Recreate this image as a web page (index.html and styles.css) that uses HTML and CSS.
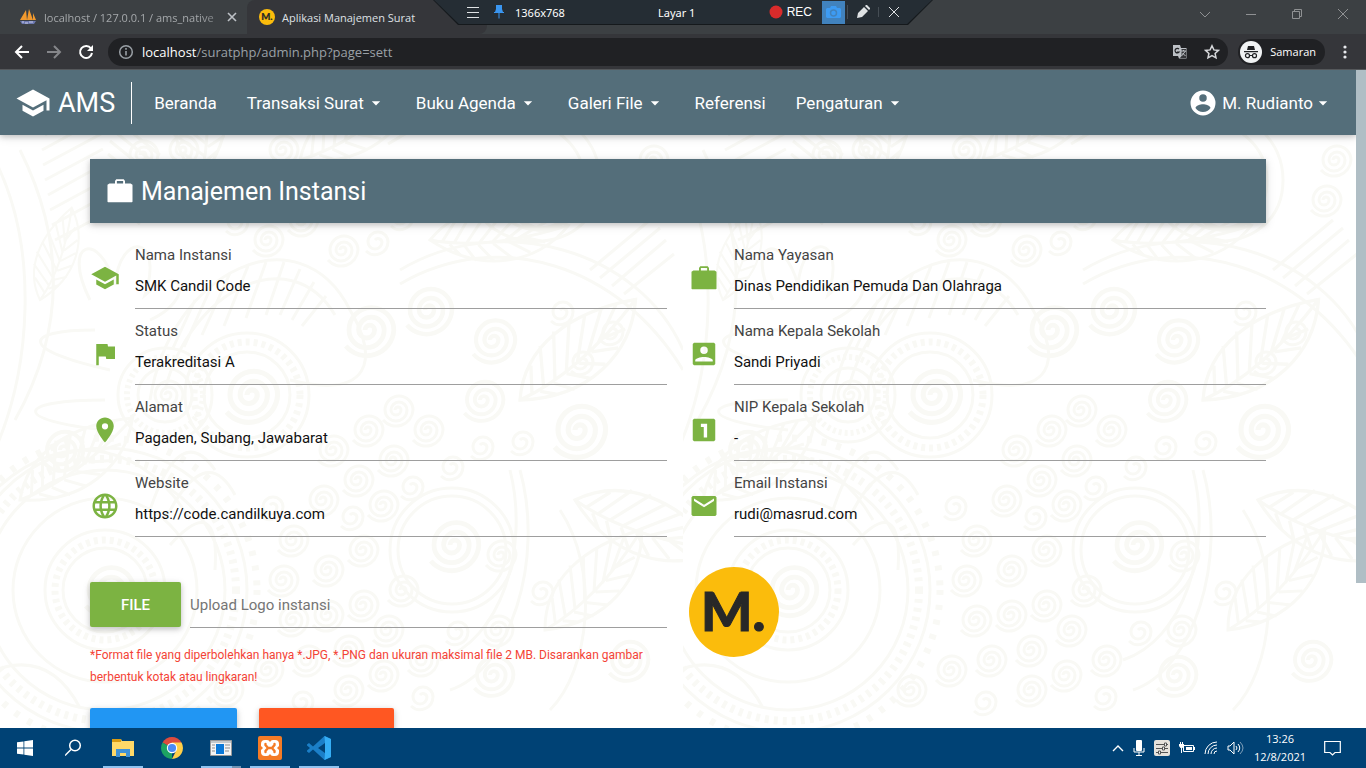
FILE: index.html
```html
<!DOCTYPE html>
<html lang="id">
<head>
<meta charset="utf-8">
<meta name="viewport" content="width=device-width, initial-scale=1">
<title>Aplikasi Manajemen Surat</title>
<link rel="stylesheet" href="styles.css">
</head>
<body>
<svg width="0" height="0" class="defs" aria-hidden="true">
  <defs>
    <symbol id="school" viewBox="0 0 24 24"><path d="M5 13.18v4L12 21l7-3.82v-4L12 17l-7-3.82zM12 3 1 9l11 6 9-4.91V17h2V9L12 3z"/></symbol>
    <symbol id="work" viewBox="0 0 24 24"><path d="M20.500 6H16V4l-1-1.500H9L8 4v2H3.500L2 7v13.500l.5.5h19l.5-.5V7zM14.500 6h-5V4h5v2z"/></symbol>
    <symbol id="flag" viewBox="0 0 24 24"><path d="M14.400 6 14 4H5v17h2v-7h5.600l.4 2h7V6z"/></symbol>
    <symbol id="place" viewBox="0 0 24 24"><path d="M12 2C8.130 2 5 5.130 5 9c0 5.250 7 13 7 13s7-7.750 7-13c0-3.870-3.130-7-7-7zm0 9.500a2.500 2.500 0 0 1 0-5 2.500 2.500 0 0 1 0 5z"/></symbol>
    <symbol id="globe" viewBox="0 0 24 24"><path d="M11.990 2C6.470 2 2 6.480 2 12s4.470 10 9.990 10C17.520 22 22 17.520 22 12S17.520 2 11.990 2zm6.930 6h-2.950c-.32-1.250-.78-2.450-1.380-3.560 1.840.63 3.370 1.910 4.330 3.560zM12 4.040c.83 1.200 1.480 2.530 1.910 3.960h-3.820c.43-1.430 1.080-2.760 1.910-3.960zM4.260 14C4.100 13.360 4 12.690 4 12s.1-1.360.26-2h3.380c-.08.66-.14 1.320-.14 2s.06 1.340.14 2H4.260zm.82 2h2.950c.32 1.250.78 2.450 1.380 3.560-1.840-.63-3.370-1.900-4.330-3.560zm2.950-8H5.080c.96-1.660 2.490-2.930 4.330-3.560C8.810 5.550 8.350 6.750 8.030 8zM12 19.960c-.83-1.200-1.480-2.530-1.910-3.960h3.820c-.43 1.430-1.080 2.760-1.910 3.960zM14.340 14H9.660c-.09-.66-.16-1.320-.16-2s.07-1.350.16-2h4.680c.09.65.16 1.320.16 2s-.07 1.340-.16 2zm.25 5.560c.6-1.110 1.060-2.310 1.380-3.560h2.950c-.96 1.650-2.490 2.930-4.330 3.560zM16.360 14c.08-.66.14-1.320.14-2s-.06-1.340-.14-2h3.380c.16.64.26 1.310.26 2s-.1 1.360-.26 2h-3.380z"/></symbol>
    <symbol id="accountbox" viewBox="0 0 24 24"><path d="M3 4v16l1 1h16l1-1V4l-1-1H4zm12 5a3 3 0 0 1-6 0 3 3 0 0 1 6 0zm-10 8c0-1.500 4-2.600 7-2.600s7 1.100 7 2.600v1H5v-1z"/></symbol>
    <symbol id="one" viewBox="0 0 24 24"><path d="M20 3H4L3 4v16l1 1h16l1-1V4zm-5.500 15h-2.700V9.500H9.500V7h5v11z"/></symbol>
    <symbol id="mail" viewBox="0 0 24 24"><path d="M21 4H3L2 5v14l1 1h18l1-1V5zm-1 4-8 5-8-5V6l8 5 8-5v2z"/></symbol>
    <symbol id="account" viewBox="0 0 24 24"><path d="M12 2a10 10 0 1 0 0 20 10 10 0 0 0 0-20zm0 3a3 3 0 1 1 0 6 3 3 0 0 1 0-6zm0 14.200a7.200 7.200 0 0 1-6-3.220c.03-1.990 4-3.080 6-3.080s5.970 1.090 6 3.080a7.200 7.200 0 0 1-6 3.220z"/></symbol>
    <symbol id="caret" viewBox="0 0 24 24"><path d="m7 10 5 5 5-5z"/></symbol>
    <symbol id="mlogo" viewBox="0 0 90 90"><circle cx="45" cy="45" r="45" fill="#fbbc0c"/><text x="12" y="64" class="mlogo-text">M.</text></symbol>
    <g id="spiral"><path d="M0 0a3 3 0 0 1 6 0a5 5 0 0 1-10 0a8 8 0 0 1 16 0a11 11 0 0 1-22 0a14 14 0 0 1 28 0a17 17 0 0 1-30 10"/></g>
    <g id="curl"><path d="M0 0a4 4 0 0 1 7 2a7 7 0 0 1-14 0a10 10 0 0 1 20 0a13 13 0 0 1-22 9"/></g>
    <g id="feather"><path d="M0 0C20-45 70-60 130-50C110-5 60 20 0 0zM0 0Q60-5 130-50M12-1 20-26M24-3 34-40M36-6 50-48M48-9 66-51M60-13 82-53M72-18 98-53M84-24 112-52M20-1 34 7M34-4 50 8M48-8 68 4M62-13 84-4M76-19 100-14M90-27 112-28"/></g>
    <pattern id="ornament" width="683" height="660" patternUnits="userSpaceOnUse">
      <g fill="none" stroke="#f9f9f5" stroke-width="3">
        <path d="M-5 90C40 180 30 300-5 380M20 80C70 180 60 270 15 350M45 65l45-25M42 80l55-30M43 95l60-32M45 110l58-31M48 125l54-30M50 140l50-27M52 155l46-25M55 170l40-21M110 45l50 40M110 58l48 38M110 71l46 37M108 84l46 36M106 97l44 35M104 110l42 33M100 123l40 31"/>
        <path d="M150 330C170 200 300 140 350 240C380 290 370 330 290 310M165 320C190 220 290 170 335 245M195 230l-22 48M212 215l-28 62M230 203l-28 62M248 196l-24 60M266 192l-20 56M284 192l-18 53M300 199l-20 46M314 212l-22 38M326 226l-24 30"/>
        <circle cx="247" cy="325" r="43"/><circle cx="247" cy="325" r="53" stroke-width="7" stroke-dasharray="4 4"/><circle cx="247" cy="325" r="62"/>
        <circle cx="165" cy="325" r="27"/><circle cx="165" cy="325" r="38" stroke-width="6" stroke-dasharray="3 3"/><circle cx="165" cy="325" r="47"/>
        <path d="M90 230C60 170 100 160 115 215C120 160 165 165 145 225C185 190 195 230 150 250M110 300C20 280 20 260 95 260M105 330C15 330 10 350 105 360"/>
        <circle cx="105" cy="520" r="42"/><circle cx="105" cy="520" r="50" stroke-width="7" stroke-dasharray="4 4"/><circle cx="105" cy="520" r="60"/>
        <circle cx="105" cy="520" r="92"/><circle cx="105" cy="520" r="120"/><circle cx="105" cy="520" r="131" stroke-width="8" stroke-dasharray="4 5"/><circle cx="105" cy="520" r="142"/><circle cx="105" cy="520" r="152" stroke-width="7" stroke-dasharray="5 10"/>
        <path d="M150 440Q180 350 215 400M165 450Q205 370 235 425M170 475Q220 420 215 500M-5 420C70 350 150 380 190 450"/>
        <circle cx="452" cy="480" r="62"/><circle cx="452" cy="480" r="54"/>
        <path d="M510 400C530 480 500 570 440 590M520 400C545 490 510 600 450 620M560 440C600 500 590 600 550 640M-5 600Q50 580 80 638"/>
        <path d="M380 60C470 0 600 30 600 110S480 190 470 120M388 74C470 20 584 42 584 110S500 172 488 120M400 200C500 140 640 180 683 280M400 214C500 156 620 196 683 300M590 200l60-50M600 208l60-50M612 216l54-46M624 224l50-40"/>
        <use href="#feather" transform="translate(545 560) rotate(-25)"/><use href="#feather" transform="translate(575 430) rotate(40) scale(1.1)"/><use href="#feather" transform="translate(520 330) rotate(-20) scale(1.1)"/><use href="#feather" transform="translate(300 90) rotate(-12)"/><use href="#feather" transform="translate(200 110) rotate(-70)"/><use href="#feather" transform="translate(40 230) rotate(-50) scale(.7)"/><use href="#feather" transform="translate(20 430) rotate(-15)"/><use href="#feather" transform="translate(430 170) rotate(15)"/>
        <use href="#spiral" transform="translate(247 325) scale(1.700)"/><use href="#spiral" transform="translate(165 325)"/><use href="#spiral" transform="translate(105 520) scale(1.600)"/><use href="#spiral" transform="translate(450 475) scale(1.600)"/><use href="#spiral" transform="translate(498 485)"/><use href="#spiral" transform="translate(495 560)"/><use href="#spiral" transform="translate(490 605) scale(1.300)"/><use href="#spiral" transform="translate(365 260) scale(1.600)"/><use href="#spiral" transform="translate(425 240) scale(1.500)"/><use href="#spiral" transform="translate(540 130) scale(1.800)"/><use href="#spiral" transform="translate(575 360) scale(1.700)"/><use href="#spiral" transform="translate(60 380) scale(1.300)"/><use href="#spiral" transform="translate(490 270) scale(1.400)"/><use href="#spiral" transform="translate(480 330) scale(1.300)"/><use href="#spiral" transform="translate(625 590) scale(1.300)"/>
        <use href="#spiral" transform="translate(290 470)"/><use href="#spiral" transform="translate(325 500)"/><use href="#spiral" transform="translate(360 480)"/><use href="#spiral" transform="translate(280 510)"/><use href="#spiral" transform="translate(290 550)"/><use href="#spiral" transform="translate(325 545)"/><use href="#spiral" transform="translate(360 535)"/><use href="#spiral" transform="translate(385 560)"/><use href="#spiral" transform="translate(345 580)"/><use href="#spiral" transform="translate(305 590)"/><use href="#spiral" transform="translate(265 600)"/><use href="#spiral" transform="translate(380 605)"/><use href="#spiral" transform="translate(420 590)"/><use href="#spiral" transform="translate(345 620)"/><use href="#spiral" transform="translate(400 520)"/><use href="#spiral" transform="translate(225 620)"/>
        <use href="#curl" transform="translate(420 625)"/><use href="#curl" transform="translate(300 630)"/><use href="#curl" transform="translate(455 560)"/><use href="#curl" transform="translate(540 520)"/><use href="#curl" transform="translate(270 435)"/><use href="#curl" transform="translate(350 445)"/><use href="#curl" transform="translate(410 415)"/><use href="#curl" transform="translate(450 395)"/><use href="#curl" transform="translate(480 375)"/><use href="#curl" transform="translate(520 370)"/>
        <use href="#spiral" transform="translate(330 380)"/><use href="#spiral" transform="translate(365 360)"/><use href="#spiral" transform="translate(395 340)"/><use href="#spiral" transform="translate(355 410)"/><use href="#spiral" transform="translate(390 390)"/><use href="#spiral" transform="translate(425 360)"/><use href="#spiral" transform="translate(320 430)"/><use href="#spiral" transform="translate(380 435)"/>
        <use href="#spiral" transform="translate(265 170)"/><use href="#spiral" transform="translate(300 150)"/><use href="#spiral" transform="translate(340 180)"/><use href="#spiral" transform="translate(140 85)"/><use href="#spiral" transform="translate(180 80)"/><use href="#spiral" transform="translate(280 80)"/><use href="#spiral" transform="translate(650 90)"/><use href="#spiral" transform="translate(640 130)"/>
        <use href="#curl" transform="translate(375 170)"/><use href="#curl" transform="translate(400 145)"/><use href="#curl" transform="translate(235 150)"/><use href="#curl" transform="translate(330 130)"/><use href="#curl" transform="translate(365 130)"/><use href="#curl" transform="translate(610 260)"/><use href="#curl" transform="translate(560 240)"/><use href="#curl" transform="translate(580 290)"/>
      </g>
    </pattern>
  </defs>
</svg>

<header class="browser">
  <div class="tabs">
    <div class="tab">
      <svg class="favicon" width="18" height="18" viewBox="0 0 18 18" aria-hidden="true"><path d="M1 12 7 2l1 10zM8 12l2-11 4 11zM14 12V5l3 7z" fill="#f29a2e"/><path d="M1 13h16l-2 3H3z" fill="#6c78af"/><path d="M3 14h2m1 1h3m1-1h4" stroke="#c9cdea"/></svg>
      <span class="tab-title faded">localhost / 127.0.0.1 / ams_native</span>
      <button class="bare" aria-label="Tutup tab"><svg width="10" height="10" viewBox="0 0 10 10"><path d="m1 1 8 8M9 1 1 9" stroke="#bdc1c6" stroke-width="1.600"/></svg></button>
    </div>
    <div class="tab active">
      <svg class="favicon" width="16" height="16" aria-hidden="true"><use href="#mlogo"/></svg>
      <span class="tab-title">Aplikasi Manajemen Surat</span>
    </div>
    <div class="window-buttons">
      <button class="bare" aria-label="Cari tab"><svg width="12" height="12" viewBox="0 0 12 12"><path d="m1 4 5 5 5-5"/></svg></button>
      <button class="bare" aria-label="Perkecil"><svg width="12" height="12" viewBox="0 0 12 12"><path d="M1 6.500h10"/></svg></button>
      <button class="bare" aria-label="Pulihkan"><svg width="12" height="12" viewBox="0 0 12 12"><path d="M1.500 3.500h7v7h-7zM3.500 3V1.500h7v7H9"/></svg></button>
      <button class="bare" aria-label="Tutup"><svg width="12" height="12" viewBox="0 0 12 12"><path d="m1 1 10 10M11 1 1 11"/></svg></button>
    </div>
  </div>
  <div class="toolbar">
    <button class="bare nav-btn" aria-label="Kembali"><svg width="16" height="16" viewBox="0 0 16 16"><path d="M15 8H2m6-6L2 8l6 6" stroke="#fff" stroke-width="2" fill="none"/></svg></button>
    <button class="bare nav-btn" aria-label="Maju"><svg width="16" height="16" viewBox="0 0 16 16"><path d="M1 8h13M8 2l6 6-6 6" stroke="#85868a" stroke-width="2" fill="none"/></svg></button>
    <button class="bare nav-btn" aria-label="Muat ulang"><svg width="16" height="16" viewBox="0 0 16 16"><path d="M13 4.500A6 6 0 1 0 14 9" stroke="#fff" stroke-width="2" fill="none"/><path d="M15 1v6H9z" fill="#fff"/></svg></button>
    <div class="address">
      <svg width="16" height="16" viewBox="0 0 16 16" aria-hidden="true"><circle cx="8" cy="8" r="6.300" fill="none" stroke="#9aa0a6" stroke-width="1.500"/><path d="M8 7v4.500M8 4v1.800" stroke="#9aa0a6" stroke-width="1.600"/></svg>
      <span class="url"><b>localhost</b>/suratphp/admin.php?page=sett</span>
      <button class="bare" aria-label="Terjemahkan"><svg width="16" height="16" viewBox="0 0 16 16"><path d="M1 1h7l1 3h5.500v10.500H7L6 12H1z" fill="#bdc1c6"/><path d="M9.500 5H14v9H8l1.500-2z" fill="#35363a"/><path d="M7 5a2.300 2.300 0 1 0 0 3.200H5" fill="none" stroke="#202124" stroke-width="1.200"/><path d="M9 7h5M11.500 6v1m2 0-4 5m1-3 3 3" stroke="#bdc1c6"/></svg></button>
      <button class="bare" aria-label="Tandai"><svg width="16" height="16" viewBox="0 0 16 16"><path d="m8 1.800 1.900 4.100 4.500.5-3.300 3 .9 4.400L8 11.600l-4 2.200.9-4.400-3.300-3 4.500-.5z" fill="none" stroke="#d5d7da" stroke-width="1.500"/></svg></button>
    </div>
    <button class="profile"><svg width="22" height="22" viewBox="0 0 22 22" aria-hidden="true"><circle cx="11" cy="11" r="11" fill="#f1f3f4"/><path d="m7 9 1-4h6l1 4zM4 10h14v1.300H4z" fill="#202124"/><path d="M9.800 14.500h2.400" stroke="#202124"/><circle cx="7.500" cy="14.700" r="2" fill="none" stroke="#202124" stroke-width="1.200"/><circle cx="14.500" cy="14.700" r="2" fill="none" stroke="#202124" stroke-width="1.200"/></svg>Samaran</button>
    <button class="bare" aria-label="Menu"><svg width="4" height="16" viewBox="0 0 4 16" fill="#e8eaed"><circle cx="2" cy="3" r="1.600"/><circle cx="2" cy="8" r="1.600"/><circle cx="2" cy="13" r="1.600"/></svg></button>
  </div>
  <div class="recorder">
    <div class="recorder-bar">
      <svg width="12" height="12" viewBox="0 0 12 12" aria-hidden="true"><path d="M0 1.500h12M0 6.500h12M0 11.500h12" stroke="#dfe2e4"/></svg>
      <svg class="pin" width="10" height="14" viewBox="0 0 10 14" aria-hidden="true"><path d="M2 0h6v4l1 3H1l1-3z" fill="#3a96f0"/><path d="M0 7.500h10M5 8v5.500" stroke="#3a96f0"/></svg>
      <span class="resolution">1366x768</span>
      <span class="screen-name">Layar 1</span>
      <button class="rec"><svg width="14" height="14" viewBox="0 0 14 14" aria-hidden="true"><circle cx="7" cy="7" r="6.500" fill="#d92b2b"/></svg>REC</button>
      <button class="camera" aria-label="Tangkap layar"><svg width="15" height="12" viewBox="0 0 15 12"><path d="M1 2h3l1-2h5l1 2h3l1 1v8l-1 1H1l-1-1V3z" fill="#3d9bf3"/><circle cx="7.500" cy="7" r="3" fill="none" stroke="#4182bd" stroke-width="1.500"/></svg></button>
      <button class="bare tool" aria-label="Gambar"><svg width="14" height="14" viewBox="0 0 14 14"><path d="m1 13 1-5 6-6 4 4-6 6zM9 1l1-1h1l3 3v1l-1 1z" fill="#dfe2e4"/></svg></button>
      <button class="bare tool" aria-label="Tutup perekam"><svg width="10" height="10" viewBox="0 0 10 10"><path d="m0 0 10 10M10 0 0 10" stroke="#dfe2e4"/></svg></button>
    </div>
  </div>
</header>

<div class="viewport">
  <div class="page">
    <svg class="ornament" aria-hidden="true"><rect width="100%" height="100%" fill="url(#ornament)"/></svg>
    <nav class="navbar">
      <a href="#" class="brand"><svg width="36" height="36" aria-hidden="true"><use href="#school"/></svg>AMS</a>
      <div class="menu">
        <a href="#">Beranda</a>
        <a href="#">Transaksi Surat<svg class="caret" aria-hidden="true"><use href="#caret"/></svg></a>
        <a href="#">Buku Agenda<svg class="caret" aria-hidden="true"><use href="#caret"/></svg></a>
        <a href="#">Galeri File<svg class="caret" aria-hidden="true"><use href="#caret"/></svg></a>
        <a href="#">Referensi</a>
        <a href="#">Pengaturan<svg class="caret" aria-hidden="true"><use href="#caret"/></svg></a>
      </div>
      <a href="#" class="user"><svg width="30" height="30" aria-hidden="true"><use href="#account"/></svg>M. Rudianto<svg class="caret" aria-hidden="true"><use href="#caret"/></svg></a>
    </nav>
    <main class="content">
      <h1 class="title"><svg width="30" height="30" aria-hidden="true"><use href="#work"/></svg>Manajemen Instansi</h1>
      <form class="form">
        <div class="field"><svg class="icon" aria-hidden="true"><use href="#school"/></svg><label for="nama">Nama Instansi</label><input id="nama" value="SMK Candil Code"></div>
        <div class="field"><svg class="icon" aria-hidden="true"><use href="#work"/></svg><label for="yayasan">Nama Yayasan</label><input id="yayasan" value="Dinas Pendidikan Pemuda Dan Olahraga"></div>
        <div class="field"><svg class="icon" aria-hidden="true"><use href="#flag"/></svg><label for="status">Status</label><input id="status" value="Terakreditasi A"></div>
        <div class="field"><svg class="icon" aria-hidden="true"><use href="#accountbox"/></svg><label for="kepsek">Nama Kepala Sekolah</label><input id="kepsek" value="Sandi Priyadi"></div>
        <div class="field"><svg class="icon" aria-hidden="true"><use href="#place"/></svg><label for="alamat">Alamat</label><input id="alamat" value="Pagaden, Subang, Jawabarat"></div>
        <div class="field"><svg class="icon" aria-hidden="true"><use href="#one"/></svg><label for="nip">NIP Kepala Sekolah</label><input id="nip" value="-"></div>
        <div class="field"><svg class="icon" aria-hidden="true"><use href="#globe"/></svg><label for="website">Website</label><input id="website" value="https://code.candilkuya.com"></div>
        <div class="field"><svg class="icon" aria-hidden="true"><use href="#mail"/></svg><label for="email">Email Instansi</label><input id="email" value="rudi@masrud.com"></div>
        <div class="upload">
          <div class="upload-row"><button type="button" class="btn file">FILE</button><input class="path" aria-label="Logo" placeholder="Upload Logo instansi"></div>
          <p class="hint">*Format file yang diperbolehkan hanya *.JPG, *.PNG dan ukuran maksimal file 2 MB. Disarankan gambar berbentuk kotak atau lingkaran!</p>
          <div class="actions"><button type="button" class="btn save" aria-label="Simpan"></button><button type="button" class="btn cancel" aria-label="Batal"></button></div>
        </div>
        <svg class="logo" role="img" aria-label="M."><use href="#mlogo"/></svg>
      </form>
    </main>
  </div>
  <div class="scrollbar"><div class="thumb"></div></div>
</div>

<footer class="taskbar">
  <button class="task" aria-label="Mulai"><svg width="16" height="16" viewBox="0 0 16 16" fill="#fff"><path d="m0 2.300 6.500-.9v6.200H0zM7.300 1.300 16 0v7.600H7.300zM0 8.400h6.500v6.200L0 13.700zM7.300 8.400H16V16l-8.700-1.300z"/></svg></button>
  <button class="task" aria-label="Cari"><svg width="18" height="18" viewBox="0 0 18 18" fill="none" stroke="#fff" stroke-width="1.500"><circle cx="10" cy="6.500" r="5.300"/><path d="m6 10.500-6 6"/></svg></button>
  <button class="task open" aria-label="Penjelajah Berkas"><svg width="22" height="20" viewBox="0 0 22 20"><path d="M0 1h9l1 2h12v15H0z" fill="#ffd968"/><path d="M0 1h9v3H0z" fill="#d99b13"/><path d="M4 19v-8h14v8h-4v-4H8v4z" fill="#3f92d8"/></svg></button>
  <button class="task" aria-label="Chrome"><svg width="22" height="22" viewBox="0 0 22 22"><path d="M11 11 1.500 5.500A11 11 0 0 1 20.500 5.500z" fill="#dd4b3e"/><path d="M11 11 1.500 5.500A11 11 0 0 0 11 22z" fill="#1da362"/><path d="M11 5.500h9.500A11 11 0 0 1 11 22l4-8z" fill="#ffcf48"/><circle cx="11" cy="11" r="5.200" fill="#fff"/><circle cx="11" cy="11" r="4.100" fill="#4b8bf5"/></svg></button>
  <button class="task open stacked" aria-label="Perekam"><svg width="22" height="16" viewBox="0 0 22 16"><path d="M.5.500h21v15H.5z" fill="#f4f4f4" stroke="#9a9a9a"/><path d="M1 1h20v2H1z" fill="#c4c9cc"/><path d="M6 4h8v10H6z" fill="#0a78d7"/><path d="M2 5h3M2 8h3M2 11h3M15 5h5M15 8h5M15 11h4" stroke="#8d8d8d"/></svg></button>
  <button class="task open" aria-label="XAMPP"><svg width="24" height="24" viewBox="0 0 24 24"><rect width="24" height="24" rx="2" fill="#f47b26"/><path d="M7 4h2q2 0 3 2 1-2 3-2h2a4 4 0 0 1 4 4v2l-2 2 2 2v2a4 4 0 0 1-4 4h-2q-2 0-3-2-1 2-3 2H7a4 4 0 0 1-4-4v-2l2-2-2-2V8a4 4 0 0 1 4-4z" fill="#fff"/><path d="M7.500 8v1l2.500 3-2.500 3v1M16.500 8v1L14 12l2.500 3v1M10 12h4" fill="none" stroke="#f47b26" stroke-width="2.400" stroke-linecap="round"/></svg></button>
  <button class="task open" aria-label="Visual Studio Code"><svg width="24" height="24" viewBox="0 0 24 24"><path d="M17.500 0 24 3v18l-6.500 3L6 13.500 2 17l-2-1.500v-1L3 12 0 9.500v-1L2 7l4 3.500zM18 7l-7 5 7 5z" fill="#1b7fc8" fill-rule="evenodd"/><path d="M17.500 0 24 3v18l-6.500 3 .5-7V7z" fill="#35aef5"/></svg></button>
  <div class="tray">
    <svg width="12" height="7" viewBox="0 0 12 7" aria-hidden="true"><path d="m1 6 5-5 5 5" fill="none" stroke="#fff" stroke-width="1.400"/></svg>
    <svg width="12" height="16" viewBox="0 0 12 16" aria-hidden="true"><rect x="3" width="6" height="11" rx="1" fill="#fff"/><path d="M1 8v4h10V8M6 12v4M3 15.500h6" fill="none" stroke="#fff"/></svg>
    <svg width="16" height="16" viewBox="0 0 16 16" aria-hidden="true"><rect width="16" height="16" rx="2" fill="#e6e2dc"/><path d="M2 4.500h12M2 8.500h12M2 12.500h12" stroke="#555"/><path d="M10.500 3h2v3h-2zM8.500 7h2v3h-2zM4.500 11h2v3h-2z" fill="#fff" stroke="#555"/></svg>
    <svg width="16" height="12" viewBox="0 0 16 12" aria-hidden="true"><path d="M4.500 3.500h10v6h-10z" fill="none" stroke="#fff"/><path d="M7 5h6v3H7zM15 5h1v3h-1zM0 2h5v2L3.500 6h-2L0 4zM1 0h1v2H1zM3 0h1v2H3zM2 6h1v5H2z" fill="#fff"/></svg>
    <svg width="14" height="14" viewBox="0 0 14 14" fill="none" stroke="#fff" aria-hidden="true"><path d="M1 13A12 12 0 0 1 13 1M4 13a9 9 0 0 1 9-9M7 13a6 6 0 0 1 6-6M10 13a3 3 0 0 1 3-3"/></svg>
    <svg width="17" height="14" viewBox="0 0 17 14" fill="none" stroke="#fff" aria-hidden="true"><path d="M1 5h2l4-4v12L3 9H1zM9 5q2 2 0 4M11 3q3.500 4 0 8"/><path d="M13 1q6 6 0 12" stroke="#7f9fb9"/></svg>
    <time class="clock"><span>13:26</span><span>12/8/2021</span></time>
    <svg width="17" height="17" viewBox="0 0 17 17" aria-hidden="true"><path d="M.7 1.500h15.600v11H11L8.500 15 6 12.500H.7z" fill="none" stroke="#fff" stroke-width="1.200"/></svg>
  </div>
</footer>
</body>
</html>
```
FILE: styles.css
```css
* { box-sizing: border-box; }
body {
  margin: 0;
  height: 100vh;
  display: flex;
  flex-direction: column;
  overflow: hidden;
  font-family: Roboto, "Liberation Sans", sans-serif;
  font-size: 15px;
  color: #444;
  background: #fff;
}
svg { display: block; flex: none; }
.defs { position: absolute; }
button { font: inherit; border: 0; cursor: pointer; }
.bare { display: flex; padding: 0; background: none; }
a { color: inherit; text-decoration: none; }
.mlogo-text { font: 900 54px Lato, sans-serif; fill: #282828; stroke: #282828; stroke-width: 1px; }

/* Browser window */
.browser {
  position: relative;
  flex: none;
  font-family: "Open Sans", "Noto Sans", sans-serif;
  background: #35363a;
}
.tabs { display: flex; height: 34px; background: #3c4043; }
.tab {
  display: flex;
  align-items: center;
  width: 247px;
  padding: 0 10px 0 19px;
  font-size: 11px;
  color: #a5a8ab;
}
.tab.active {
  width: 240px;
  padding-left: 12px;
  border-radius: 8px 8px 8px 0;
  background: #35363a;
  color: #dfe1e5;
}
.favicon { margin-right: 7px; }
.tab-title { flex: 1; white-space: nowrap; }
.faded { mask-image: linear-gradient(to right, #000 85%, rgba(0, 0, 0, .3)); }
.window-buttons {
  display: flex;
  align-items: center;
  gap: 34px;
  margin-left: auto;
  padding: 0 17px 6px 0;
}
.window-buttons svg { fill: none; stroke: #8f9193; }
.toolbar { display: flex; align-items: center; height: 36px; padding: 0 19px 0 14px; border-bottom: 1px solid #55585b; }
.nav-btn { margin-right: 16px; }
.address {
  flex: 1;
  display: flex;
  align-items: center;
  gap: 16px;
  height: 28px;
  margin-right: 10px;
  padding: 0 8px 0 10px;
  border-radius: 14px;
  background: #202124;
  font-size: 13px;
  color: #9aa0a6;
}
.nav-btn + .address { margin-left: -2px; }
.url { flex: 1; margin-left: -8px; }
.url b { font-weight: 400; color: #fff; }
.profile {
  display: flex;
  align-items: center;
  gap: 8px;
  height: 26px;
  margin-right: 18px;
  padding: 0 9px 0 2px;
  border-radius: 13px;
  background: #202124;
  color: #fff;
  font-size: 11px;
}

/* Screen recorder */
.recorder {
  position: absolute;
  top: 0;
  left: 50%;
  width: 500px;
  height: 25px;
  margin-left: -250px;
  padding: 0 1px 1px;
  background: #15191c;
  clip-path: polygon(0 0, 100% 0, 95% 100%, 5% 100%);
}
.recorder-bar {
  display: flex;
  align-items: center;
  height: 24px;
  padding-left: 33px;
  background: #252d34;
  clip-path: polygon(0 0, 100% 0, 95% 100%, 5% 100%);
  color: #fff;
  font-size: 12px;
}
.pin { margin-left: 15px; }
.resolution { width: 143px; margin-left: 11px; font-family: "Noto Sans", sans-serif; font-size: 11px; }
.screen-name { flex: 1; font-family: "Noto Sans", sans-serif; font-size: 11px; }
.rec { display: flex; align-items: center; gap: 4px; padding: 0; background: none; color: #fff; font-family: "Liberation Sans", sans-serif; }
.camera { display: grid; place-items: center; width: 23px; height: 23px; margin: 0 2px 0 10px; padding: 0; background: #4182bd; }
.tool { width: 31px; justify-content: center; border-left: 1px solid #454d54; }
.tool:last-child { margin-right: 23px; }

/* Page */
.viewport { flex: 1; display: flex; min-height: 0; background: #fff; }
.page { flex: 1; position: relative; overflow: hidden; }
.ornament { position: absolute; inset: 0; width: 100%; height: 100%; }
.scrollbar { width: 10px; background: #fff; }
.thumb { height: 78%; background: #b0bec5; }
.navbar {
  position: relative;
  display: flex;
  align-items: center;
  height: 65px;
  padding: 0 23px 0 15px;
  background: #546e7a;
  color: #fff;
  font-size: 17px;
  box-shadow: 0 2px 5px rgba(0, 0, 0, .16), 0 2px 10px rgba(0, 0, 0, .12);
}
.navbar svg, .title svg { fill: currentColor; }
.brand {
  display: flex;
  align-items: center;
  gap: 7px;
  height: 42px;
  padding-right: 16px;
  border-right: 1px solid #fff;
  font-size: 27px;
}
.menu { display: flex; gap: 30px; margin-left: 22px; }
.menu a, .user { display: flex; align-items: center; }
.caret { width: 20px; height: 20px; margin-left: 2px; }
.user { margin-left: auto; }
.user > svg:first-child { margin-right: 4px; }
.user .caret { margin-left: 0; }
.content { position: relative; padding: 24px 90px 0; }
.title {
  display: flex;
  align-items: center;
  gap: 6px;
  height: 64px;
  margin: 0 0 10px;
  padding-left: 15px;
  background: #546e7a;
  color: #fff;
  font-size: 25px;
  font-weight: 400;
  box-shadow: 0 2px 5px rgba(0, 0, 0, .16), 0 2px 10px rgba(0, 0, 0, .12);
}
.form { display: grid; grid-template-columns: 1fr 1fr; column-gap: 22px; align-items: start; }
.field {
  display: grid;
  grid-template-columns: 45px 1fr;
  grid-template-rows: 20px 44px;
  padding-top: 12px;
}
.icon { grid-row: 1 / 3; width: 30px; height: 30px; margin-top: 18px; fill: #7cb342; }
.field label { line-height: 20px; }
.field input, .path {
  width: 100%;
  min-width: 0;
  padding: 0;
  border: 0;
  border-bottom: 1px solid #9e9e9e;
  outline: 0;
  background: none;
  font: inherit;
  color: #111;
}
.field input { padding-bottom: 2px; }
.path::placeholder { color: #757575; opacity: 1; }
.upload { padding-top: 45px; }
.upload-row { display: flex; gap: 9px; height: 46px; }
.btn { height: 45px; padding: 0; border-radius: 2px; color: #fff; box-shadow: 0 2px 5px rgba(0, 0, 0, .16), 0 2px 8px rgba(0, 0, 0, .12); }
.file { flex: none; width: 91px; background: #7cb342; font-weight: 500; }
.hint { margin: 16px 0 20px; font-size: 12px; line-height: 22px; color: #f44336; }
.actions { display: flex; gap: 22px; }
.save { width: 147px; background: #2196f3; }
.cancel { width: 135px; background: #ff5722; }
.logo { width: 90px; height: 90px; margin-top: 30px; }

/* Taskbar */
.taskbar { display: flex; flex: none; height: 40px; padding-right: 25px; background: #004275; color: #fff; }
.task { display: grid; place-items: center; width: 49px; padding: 0; background: none; }
.open { background: linear-gradient(#8fc3f0, #8fc3f0) center bottom / 40px 2px no-repeat; }
.stacked { background: linear-gradient(to right, #8fc3f0 31px, #6f93b3 31px) center bottom / 40px 2px no-repeat; }
.tray { display: flex; align-items: center; gap: 9px; margin-left: auto; }
.clock {
  display: flex;
  flex-direction: column;
  width: 54px;
  text-align: center;
  font: 11px/18px "Open Sans", "Noto Sans", sans-serif;
}
.tray svg:last-child { margin-left: 8px; }
```
